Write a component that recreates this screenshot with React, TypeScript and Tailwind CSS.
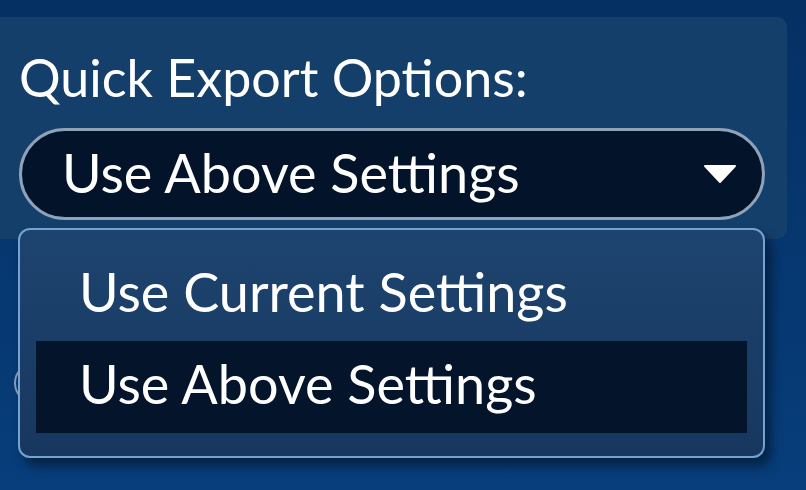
import { useState } from "react";

const options = ["Use Current Settings", "Use Above Settings"];

export default function App() {
  const [selected] = useState("Use Above Settings");

  return (
    <div
      className="relative w-[806px] h-[490px] overflow-hidden bg-gradient-to-b from-[#053064] to-[#073e7b] text-white"
      style={{ fontFamily: "Lato, 'Open Sans', sans-serif" }}
    >
      {/* settings panel */}
      <div className="mt-[17px] ml-[-10px] w-[797px] h-[222px] rounded-[10px] bg-[#153f6b] pl-[29px] pr-[22px] pt-[28px]">
        <div className="text-[52px] leading-[64px] text-white">Quick Export Options:</div>
        <div className="mt-[19px] flex h-[92px] items-center justify-between rounded-full border-[3px] border-[#8ea3ba] bg-[#03132a] pl-[40px] pr-[25px]">
          <span className="pb-[2px] text-[54px] leading-none">{selected}</span>
          <svg width="34" height="20" viewBox="0 0 34 20">
            <path d="M2 2 L32 2 L17 18 Z" fill="#ffffff" stroke="#ffffff" strokeWidth="2" strokeLinejoin="round" />
          </svg>
        </div>
      </div>

      {/* radio edge peeking behind the menu */}
      <div className="absolute left-[14px] top-[362px] h-[42px] w-[42px] rounded-full border-2 border-[#8a9fb6]" />

      {/* open menu */}
      <div className="absolute left-[18px] top-[228px] w-[747px] h-[230px] rounded-[12px] border-2 border-[#74a3d2] bg-gradient-to-b from-[#1d446f] to-[#17375f] px-[16px] py-[19px] shadow-[6px_8px_12px_rgba(0,0,0,0.45)]">
        {options.map((o) => (
          <div
            key={o}
            className={`flex h-[92px] items-center pl-[43px] pb-[6px] text-[54px] leading-none ${
              o === selected ? "bg-[#04142a]" : ""
            }`}
          >
            {o}
          </div>
        ))}
      </div>
    </div>
  );
}
